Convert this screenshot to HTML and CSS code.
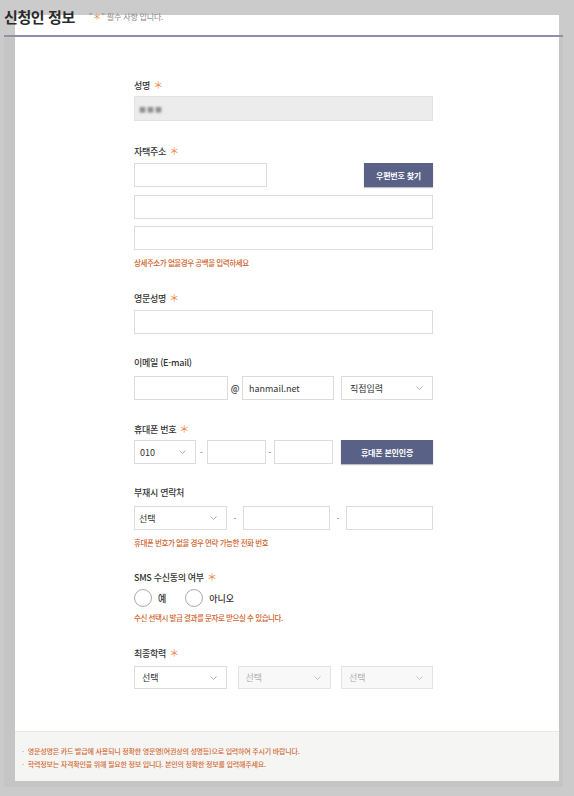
FILE: index.html
```html
<!DOCTYPE html>
<html lang="ko">

<head>
    <meta charset="UTF-8">
    <meta name="viewport" content="width=device-width, initial-scale=1.0">
    <title>신청인 정보</title>
    <link rel="stylesheet" href="styles.css">
</head>

<body>
    <div class="screen">
        <div class="head">
            <h2>신청인 정보</h2>
            <span class="req-note">"<em>＊</em>" 필수 사항 입니다.</span>
        </div>

        <div class="frame">
            <div class="panel">
                <div class="form">
                    <div class="field f-name">
                        <label>성명 <em>＊</em></label>
                        <div class="input readonly"><span class="blur">■■■</span></div>
                    </div>

                    <div class="field f-addr">
                        <label>자택주소 <em>＊</em></label>
                        <div class="row between">
                            <div class="input zip"></div>
                            <button class="btn btn-zip">우편번호 찾기</button>
                        </div>
                        <div class="input addr1"></div>
                        <div class="input addr2"></div>
                        <p class="note">상세주소가 없을경우 공백을 입력하세요</p>
                    </div>

                    <div class="field f-eng">
                        <label>영문성명 <em>＊</em></label>
                        <div class="input"></div>
                    </div>

                    <div class="field f-mail">
                        <label>이메일 (E-mail)</label>
                        <div class="row">
                            <div class="input mail-id"></div>
                            <span class="at">@</span>
                            <div class="input mail-domain">hanmail.net</div>
                            <div class="select mail-select"><span>직접입력</span>
                                <svg width="7" height="4" viewBox="0 0 7 4"><path d="M0.5 0.5L3.5 3.5L6.5 0.5" fill="none" stroke="#9a9a9a" stroke-width="0.8"/></svg>
                            </div>
                        </div>
                    </div>

                    <div class="field f-phone">
                        <label>휴대폰 번호 <em>＊</em></label>
                        <div class="row">
                            <div class="select phone-pre"><span>010</span>
                                <svg width="7" height="4" viewBox="0 0 7 4"><path d="M0.5 0.5L3.5 3.5L6.5 0.5" fill="none" stroke="#9a9a9a" stroke-width="0.8"/></svg>
                            </div>
                            <span class="dash d1">-</span>
                            <div class="input phone-part"></div>
                            <span class="dash d2">-</span>
                            <div class="input phone-part"></div>
                            <button class="btn btn-auth">휴대폰 본인인증</button>
                        </div>
                    </div>

                    <div class="field f-alt">
                        <label>부재시 연락처</label>
                        <div class="row">
                            <div class="select alt-pre"><span>선택</span>
                                <svg width="7" height="4" viewBox="0 0 7 4"><path d="M0.5 0.5L3.5 3.5L6.5 0.5" fill="none" stroke="#9a9a9a" stroke-width="0.8"/></svg>
                            </div>
                            <span class="dash d3">-</span>
                            <div class="input alt-part"></div>
                            <span class="dash d3">-</span>
                            <div class="input alt-part"></div>
                        </div>
                        <p class="note">휴대폰 번호가 없을 경우 연락 가능한 전화 번호</p>
                    </div>

                    <div class="field f-sms">
                        <label>SMS 수신동의 여부 <em>＊</em></label>
                        <div class="radios">
                            <span class="radio"><i></i>예</span>
                            <span class="radio"><i></i>아니오</span>
                        </div>
                        <p class="note">수신 선택시 발급 결과를 문자로 받으실 수 있습니다.</p>
                    </div>

                    <div class="field f-edu">
                        <label>최종학력 <em>＊</em></label>
                        <div class="row edu">
                            <div class="select edu-sel"><span>선택</span>
                                <svg width="7" height="4" viewBox="0 0 7 4"><path d="M0.5 0.5L3.5 3.5L6.5 0.5" fill="none" stroke="#9a9a9a" stroke-width="0.8"/></svg>
                            </div>
                            <div class="select edu-sel disabled"><span>선택</span>
                                <svg width="7" height="4" viewBox="0 0 7 4"><path d="M0.5 0.5L3.5 3.5L6.5 0.5" fill="none" stroke="#b5b5b5" stroke-width="0.8"/></svg>
                            </div>
                            <div class="select edu-sel disabled"><span>선택</span>
                                <svg width="7" height="4" viewBox="0 0 7 4"><path d="M0.5 0.5L3.5 3.5L6.5 0.5" fill="none" stroke="#b5b5b5" stroke-width="0.8"/></svg>
                            </div>
                        </div>
                    </div>
                </div>

                <div class="foot">
                    <p><b>·</b>영문성명은 카드 발급에 사용되니 정확한 영문명(여권상의 성명등)으로 입력하여 주시기 바랍니다.</p>
                    <p><b>·</b>학력정보는 자격확인을 위해 필요한 정보 입니다. 본인의 정확한 정보를 입력해주세요.</p>
                </div>
            </div>
        </div>
    </div>
</body>

</html>
```

FILE: styles.css
```css
html,
body {
    margin: 0;
    height: 796px;
    overflow: hidden;
}

body {
    background-color: #cbcbcb;
    font-family: "Noto Sans CJK KR", "Noto Sans", sans-serif;
    color: #333;
}

.screen {
    position: relative;
    padding-top: 38px;
}

/* title bar lies over the panel */
.head {
    position: absolute;
    top: 0;
    left: 4px;
    width: 559px;
    height: 37px;
    border-bottom: 2px solid #8c90a8;
    display: flex;
    align-items: baseline;
    box-sizing: border-box;
    padding-top: 7px;
    z-index: 2;
}

.head h2 {
    margin: 0;
    font-size: 15px;
    font-weight: 700;
    letter-spacing: -0.4px;
    color: #2b2b2b;
    line-height: 20px;
}

.req-note {
    margin-left: 14px;
    font-size: 8px;
    color: #888;
    letter-spacing: -0.2px;
    position: relative;
    top: -3px;
}

.req-note em,
label em {
    font-style: normal;
    color: #f0873c;
}

.req-note em {
    font-size: 9px;
}

.frame {
    display: flow-root;
    margin-left: 4px;
    width: 559px;
    height: 749px;
    background-color: #c5c5c5;
}

.panel {
    margin: -23px 0 0 11px;
    width: 544px;
    background: #fff;
}

.form {
    height: 716px;
    box-sizing: border-box;
    padding: 64px 0 0 119px;
}

.field {
    width: 299px;
    margin-bottom: 24px;
}

.field label {
    display: block;
    font-size: 9px;
    font-weight: 500;
    line-height: 12px;
    height: 12px;
    letter-spacing: -0.3px;
    margin-bottom: 5px;
    color: #333;
}

.field label em {
    font-size: 10px;
    font-weight: 400;
    margin-left: 1px;
}

.f-addr label,
.f-eng label,
.f-sms label {
    margin-bottom: 6px;
}

.f-mail label,
.f-alt label,
.f-edu label {
    margin-bottom: 7px;
}

.f-eng,
.f-mail,
.f-alt {
    margin-bottom: 23px;
}

.f-phone {
    margin-bottom: 23px;
}

.input,
.select {
    height: 24px;
    box-sizing: border-box;
    border: 1px solid #dcdcdc;
    background: #fff;
    font-size: 9px;
    color: #333;
    padding: 0 6px;
    display: flex;
    align-items: center;
}

.readonly {
    height: 25px;
    background: #ececec;
    border-color: #e2e2e2;
}

.blur {
    color: #8f8f8f;
    filter: blur(1.1px);
    font-size: 7px;
    letter-spacing: 1px;
    margin-left: -2px;
}

.addr1 {
    margin-top: 8px;
}

.addr2 {
    margin-top: 7px;
}

.row {
    display: flex;
    align-items: center;
}

.row.between {
    justify-content: space-between;
}

.zip {
    width: 133px;
}

.btn {
    height: 24px;
    border: none;
    background-color: #5a6186;
    color: #fff;
    font-family: inherit;
    font-size: 8px;
    font-weight: 700;
    letter-spacing: -0.2px;
    padding: 0;
    box-shadow: 0 1px 1px rgba(0, 0, 0, 0.25);
}

.btn-zip {
    width: 69px;
}

.btn-auth {
    width: 92px;
    margin-left: 8px;
}

.select {
    justify-content: space-between;
    padding-right: 9px;
}

.mail-id {
    width: 94px;
}

.at {
    width: 14px;
    text-align: center;
    font-size: 9px;
    font-weight: 500;
}

.mail-domain {
    width: 92px;
}

.mail-select {
    width: 92px;
    margin-left: 7px;
    padding-left: 8px;
}

.phone-pre {
    width: 62px;
    padding-left: 5px;
}

.dash {
    text-align: center;
    font-size: 8px;
    color: #666;
}

.d1 {
    width: 11px;
}

.d2 {
    width: 8px;
}

.d3 {
    width: 16px;
}

.phone-part {
    width: 59px;
}

.alt-pre {
    width: 93px;
    padding-left: 4px;
}

.alt-part {
    width: 87px;
}

.note {
    margin: 8px 0 0;
    font-size: 7.5px;
    font-weight: 500;
    line-height: 10px;
    letter-spacing: -0.45px;
    color: #cf5f2c;
}

.radios {
    display: flex;
    align-items: center;
    height: 18px;
}

.radio {
    display: flex;
    align-items: center;
    font-size: 9px;
    font-weight: 500;
    margin-right: 19px;
}

.radio i {
    width: 18px;
    height: 18px;
    box-sizing: border-box;
    border: 1px solid #a9a9a9;
    border-radius: 50%;
    margin-right: 6px;
}

.f-sms .note {
    margin-top: 6px;
}

.edu {
    justify-content: space-between;
}

.edu-sel {
    width: 93px;
    height: 23px;
    padding-left: 7px;
}

.edu-sel:last-child {
    width: 92px;
}

.edu-sel.disabled {
    background: #f8f8f8;
    border-color: #e3e3e3;
    color: #b0b0b0;
}

.foot {
    height: 50px;
    box-sizing: border-box;
    background-color: #f5f5f3;
    border-top: 1px solid #e9e9e7;
    padding: 13px 0 0 7px;
}

.foot p {
    margin: 0;
    font-size: 7px;
    font-weight: 500;
    line-height: 13px;
    letter-spacing: -0.2px;
    color: #d26a35;
}

.foot p b {
    font-weight: 400;
    color: #999;
    margin-right: 4px;
}
```
